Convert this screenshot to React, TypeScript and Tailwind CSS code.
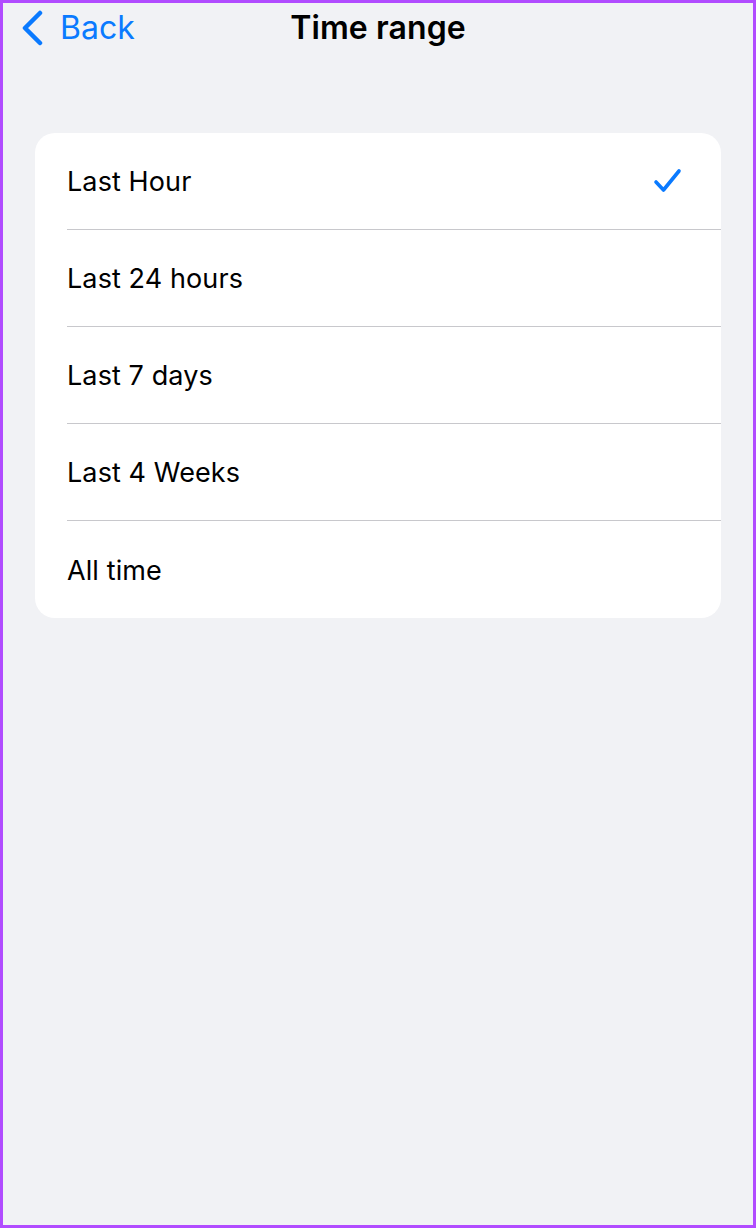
import { useState } from 'react';

const options = ['Last Hour', 'Last 24 hours', 'Last 7 days', 'Last 4 Weeks', 'All time'];

export default function App() {
  const [selected, setSelected] = useState('Last Hour');
  return (
    <div
      className="h-[1228px] w-full border-[3px] border-[#b14cff] bg-[#f1f2f5] text-black"
      style={{ fontFamily: 'Inter, "Noto Sans", sans-serif' }}
    >
      <div className="relative flex h-[54px] items-center justify-center">
        <button className="absolute left-[17px] top-[7px] flex items-center gap-[16px] text-[#0a7aff]">
          <svg width="24" height="36" viewBox="0 0 24 36" fill="none">
            <path d="M20 3 L5 18 L20 33" stroke="#0a7aff" strokeWidth="4.5" strokeLinecap="round" strokeLinejoin="round" />
          </svg>
          <span className="text-[32px] leading-none">Back</span>
        </button>
        <h1 className="text-[32px] font-semibold tracking-[0.1px] leading-none -mt-[4px]">Time range</h1>
      </div>
      <div className="mx-[32px] mt-[76px] overflow-hidden rounded-[20px] bg-white">
        {options.map((opt, i) => (
          <div key={opt} className="pl-[32px]" onClick={() => setSelected(opt)}>
            <div
              className={`flex h-[97px] items-center justify-between pr-[38px] ${
                i < options.length - 1 ? 'border-b border-[#c8c8cc]' : ''
              }`}
            >
              <span className="mt-[3px] text-[27px] tracking-[0.1px]">{opt}</span>
              {selected === opt && (
                <svg width="30" height="26" viewBox="0 0 30 26" fill="none">
                  <path d="M3 14 L10.5 22 L26 3" stroke="#0a7aff" strokeWidth="3.6" strokeLinecap="round" strokeLinejoin="round" />
                </svg>
              )}
            </div>
          </div>
        ))}
      </div>
    </div>
  );
}
